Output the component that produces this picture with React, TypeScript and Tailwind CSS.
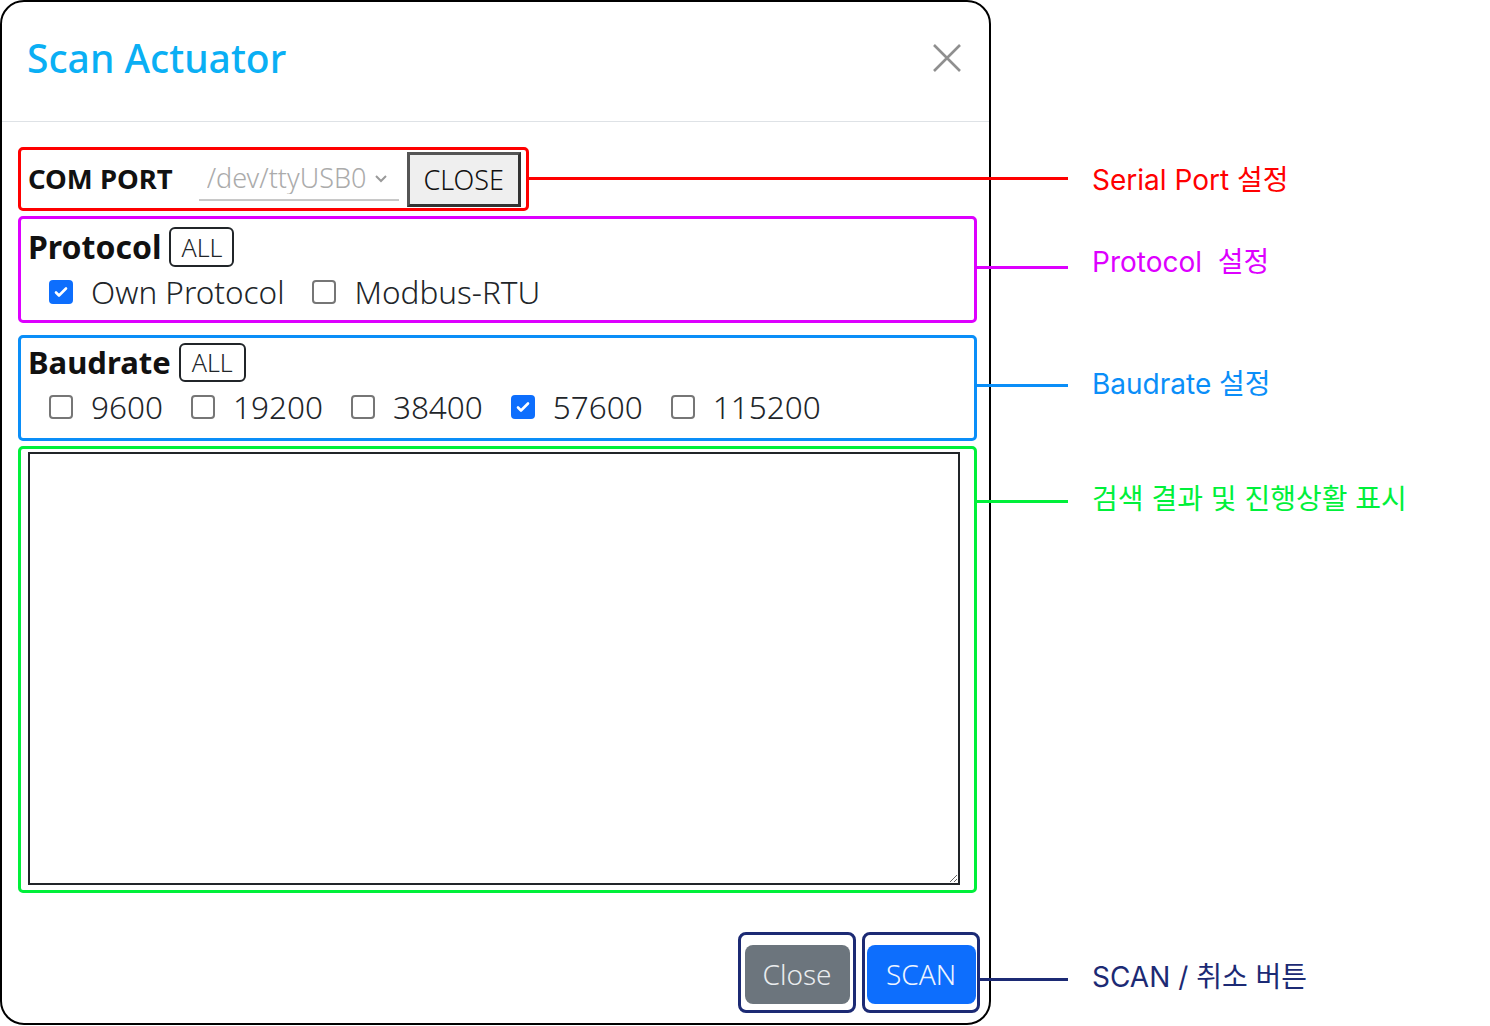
import React from 'react'

const ui = "font-['Noto_Sans',sans-serif]"

function Box({ checked }: { checked?: boolean }) {
  return checked ? (
    <span className="flex h-[24px] w-[24px] shrink-0 items-center justify-center rounded-[4px] bg-[#0d6efd]">
      <svg width="16" height="16" viewBox="0 0 16 16">
        <path d="M3 8.5l3 3 7-7" fill="none" stroke="white" strokeWidth="2.6" strokeLinecap="round" strokeLinejoin="round" />
      </svg>
    </span>
  ) : (
    <span className="h-[24px] w-[24px] shrink-0 rounded-[4px] border-2 border-[#767676] bg-white" />
  )
}

function Check({ label, checked, first }: { label: string; checked?: boolean; first?: boolean }) {
  return (
    <label className={`flex items-center gap-[18px] ${first ? '' : 'ml-[28px]'}`}>
      <Box checked={checked} />
      <span className="text-[31.5px] font-light leading-none text-[#212529]">{label}</span>
    </label>
  )
}

function AllButton({ w, h }: { w: string; h: string }) {
  return (
    <button className={`${w} ${h} ml-[8px] flex items-center justify-center rounded-[6px] border-2 border-[#212529] text-[25px] font-light leading-none text-[#212529]`}>
      ALL
    </button>
  )
}

const notes = [
  { text: 'Serial Port 설정', color: 'text-[#ff0000]', top: 'top-[161px]' },
  { text: 'Protocol  설정', color: 'text-[#dd00ff]', top: 'top-[243px]' },
  { text: 'Baudrate 설정', color: 'text-[#0a8ef8]', top: 'top-[365px]' },
  { text: '검색 결과 및 진행상활 표시', color: 'text-[#00f03a]', top: 'top-[480px]' },
  { text: 'SCAN / 취소 버튼', color: 'text-[#1c2a74]', top: 'top-[958px]' },
]

export default function App() {
  return (
    <div className={`relative h-[1026px] w-[1490px] overflow-hidden bg-white ${ui}`}>
      <div className="flex h-[1025px] w-[991px] flex-col rounded-[24px] border-2 border-black bg-white">
        <div className="flex h-[120px] items-center justify-between border-b border-[#dee2e6] pb-[8px] pl-[25px] pr-[27px]">
          <h1 className="text-[39px] font-medium leading-none text-[#0aaff4]">Scan Actuator</h1>
          <svg width="30" height="30" viewBox="0 0 30 30">
            <path d="M2 2l26 26M28 2L2 28" stroke="#8f8f8f" strokeWidth="2.6" />
          </svg>
        </div>

        <div className="flex flex-1 flex-col pl-[16px] pr-[12px] pt-[25px]">
          <div className="flex h-[64px] w-[511px] items-center rounded-[5px] border-[3px] border-[#ff0000] pl-[7px]">
            <span className="text-[27.5px] font-bold leading-none text-[#111]">COM PORT</span>
            <div className="ml-[26px] flex h-[44px] w-[200px] items-center border-b-2 border-[#c8c8c8] pl-[8px] pr-[8px]">
              <span className="w-[162px] overflow-hidden whitespace-nowrap text-[27px] font-light leading-[32px] text-[#ababab]">
                /dev/ttyUSB0
              </span>
              <svg width="16" height="16" viewBox="0 0 16 16" className="ml-[4px]">
                <path d="M3 6l5 5 5-5" fill="none" stroke="#9a9a9a" strokeWidth="2" />
              </svg>
            </div>
            <button className="ml-[8px] flex h-[55px] w-[114px] items-center justify-center border-[3px] border-[#333] border-t-[#555] border-l-[#555] bg-[#efefef] text-[27px] font-light leading-none text-[#111]">
              CLOSE
            </button>
          </div>

          <div className="mt-[5px] flex h-[107px] flex-col rounded-[5px] border-[3px] border-[#dd00ff] pl-[7px] pt-[8px]">
            <div className="flex items-center">
              <span className="text-[32px] font-bold leading-none text-[#111]">Protocol</span>
              <AllButton w="w-[65px]" h="h-[40px]" />
            </div>
            <div className="mt-[9px] flex items-center pl-[21px]">
              <Check label="Own Protocol" checked first />
              <Check label="Modbus-RTU" />
            </div>
          </div>

          <div className="mt-[12px] flex h-[106px] flex-col rounded-[5px] border-[3px] border-[#0a8ef8] pl-[7px] pt-[5px]">
            <div className="flex items-center">
              <span className="text-[31px] font-bold leading-none text-[#111]">Baudrate</span>
              <AllButton w="w-[67px]" h="h-[39px]" />
            </div>
            <div className="mt-[9px] flex items-center pl-[21px]">
              <Check label="9600" first />
              <Check label="19200" />
              <Check label="38400" />
              <Check label="57600" checked />
              <Check label="115200" />
            </div>
          </div>

          <div className="mt-[5px] flex h-[447px] rounded-[5px] border-[3px] border-[#00f03a] pb-[5px] pl-[7px] pr-[14px] pt-[3px]">
            <textarea className="h-full w-full resize border-2 border-[#212529] bg-white outline-none" />
          </div>

          <div className="-mr-[3px] flex flex-1 items-end justify-end gap-[6px] pb-[10px]">
            <div className="flex h-[81px] w-[118px] items-center justify-center rounded-[8px] border-[3px] border-[#1c2a74] pt-[3px]">
              <button className="flex h-[59px] w-[105px] items-center justify-center rounded-[8px] bg-[#6c757d] text-[28px] font-light leading-none text-[#e9ecef]">
                Close
              </button>
            </div>
            <div className="flex h-[81px] w-[118px] items-center justify-center rounded-[8px] border-[3px] border-[#1c2a74] pt-[3px]">
              <button className="flex h-[59px] w-[109px] items-center justify-center rounded-[8px] bg-[#0d6efd] text-[28px] font-light leading-none text-[#eef4ff]">
                SCAN
              </button>
            </div>
          </div>
        </div>
      </div>

      <div className="absolute left-[529px] top-[177px] h-[3px] w-[539px] bg-[#ff0000]" />
      <div className="absolute left-[977px] top-[266px] h-[3px] w-[91px] bg-[#dd00ff]" />
      <div className="absolute left-[977px] top-[384px] h-[3px] w-[91px] bg-[#0a8ef8]" />
      <div className="absolute left-[977px] top-[500px] h-[3px] w-[91px] bg-[#00f03a]" />
      <div className="absolute left-[979px] top-[978px] h-[3px] w-[89px] bg-[#1c2a74]" />

      {notes.map((n) => (
        <div
          key={n.text}
          className={`absolute left-[1092px] whitespace-pre text-[28px] leading-[38px] font-['Inter','Noto_Sans_CJK_KR',sans-serif] ${n.color} ${n.top}`}
        >
          {n.text}
        </div>
      ))}
    </div>
  )
}
